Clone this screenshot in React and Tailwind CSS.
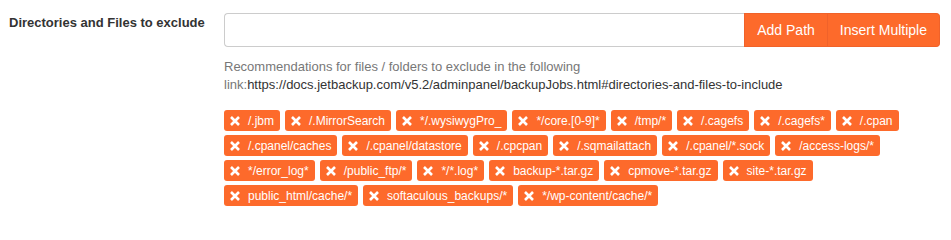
import React from "react";

const EXCLUDES = [
  "/.jbm",
  "/.MirrorSearch",
  "*/.wysiwygPro_",
  "*/core.[0-9]*",
  "/tmp/*",
  "/.cagefs",
  "/.cagefs*",
  "/.cpan",
  "/.cpanel/caches",
  "/.cpanel/datastore",
  "/.cpcpan",
  "/.sqmailattach",
  "/.cpanel/*.sock",
  "/access-logs/*",
  "*/error_log*",
  "/public_ftp/*",
  "*/*.log*",
  "backup-*.tar.gz",
  "cpmove-*.tar.gz",
  "site-*.tar.gz",
  "public_html/cache/*",
  "softaculous_backups/*",
  "*/wp-content/cache/*",
];

function TimesIcon() {
  return (
    <svg viewBox="0 0 10 10" className="h-[10px] w-[10px] shrink-0" aria-hidden="true">
      <path d="M1 1 L9 9 M9 1 L1 9" stroke="#fff" strokeWidth="2.6" fill="none" />
    </svg>
  );
}

function PathTag({ path }) {
  return (
    <span className="flex h-[21px] items-center rounded-[3px] bg-[#fd6a2b] pl-[6px] pr-[6px] text-[12px] leading-none text-white">
      <TimesIcon />
      <span className="ml-[8px] whitespace-nowrap">{path}</span>
    </span>
  );
}

export default function App() {
  return (
    <div
      className="flex bg-white pl-[9px] pt-[13px] text-[#333]"
      style={{ fontFamily: '"Liberation Sans", Arial, sans-serif' }}
    >
      <div className="w-[215px] shrink-0 pt-px text-[13px] font-bold leading-[18px]">
        Directories and Files to exclude
      </div>

      <div className="w-[716px]">
        {/* input + buttons */}
        <div className="flex h-[34px]">
          <input
            type="text"
            className="min-w-0 flex-1 rounded-l-[4px] border border-r-0 border-[#ccc] px-3 text-[14px] outline-none"
          />
          <button className="border border-[#f0622a] bg-[#fd6a2b] px-3 text-[14px] text-white">
            Add Path
          </button>
          <button className="rounded-r-[4px] border border-l-0 border-[#f0622a] bg-[#fd6a2b] px-3 text-[14px] text-white">
            Insert Multiple
          </button>
        </div>

        <div className="mt-[11px] text-[13px] leading-[18px] text-[#777]">
          <div>Recommendations for files / folders to exclude in the following</div>
          <div>
            link:<span className="text-[#333]">https://docs.jetbackup.com/v5.2/adminpanel/backupJobs.html#directories-and-files-to-include</span>
          </div>
        </div>

        <div className="mt-4 flex flex-wrap gap-x-[5px] gap-y-1">
          {EXCLUDES.map((p) => (
            <PathTag key={p} path={p} />
          ))}
        </div>
      </div>
    </div>
  );
}
